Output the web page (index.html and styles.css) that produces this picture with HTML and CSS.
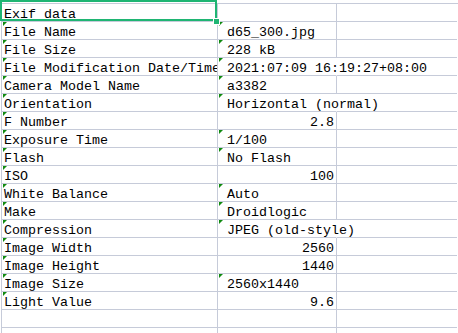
FILE: index.html
```html
<!DOCTYPE html>
<html>
<head>
<meta charset="utf-8">
<link rel="stylesheet" href="styles.css">
</head>
<body>
<div class="sheet">
  <div class="row"><div class="c a sel">Exif data<span class="handle"></span></div><div class="c b"></div><div class="c x"></div></div>
  <div class="row"><div class="c a t">File Name</div><div class="c b t"> d65_300.jpg</div><div class="c x"></div></div>
  <div class="row"><div class="c a t">File Size</div><div class="c b t"> 228 kB</div><div class="c x"></div></div>
  <div class="row"><div class="c a t">File Modification Date/Time</div><div class="c b t spill"> 2021:07:09 16:19:27+08:00</div><div class="c x"></div></div>
  <div class="row"><div class="c a t">Camera Model Name</div><div class="c b t"> a3382</div><div class="c x"></div></div>
  <div class="row"><div class="c a t">Orientation</div><div class="c b t spill"> Horizontal (normal)</div><div class="c x"></div></div>
  <div class="row"><div class="c a t">F Number</div><div class="c b num">2.8</div><div class="c x"></div></div>
  <div class="row"><div class="c a t">Exposure Time</div><div class="c b t"> 1/100</div><div class="c x"></div></div>
  <div class="row"><div class="c a t">Flash</div><div class="c b t"> No Flash</div><div class="c x"></div></div>
  <div class="row"><div class="c a t">ISO</div><div class="c b num">100</div><div class="c x"></div></div>
  <div class="row"><div class="c a t">White Balance</div><div class="c b t"> Auto</div><div class="c x"></div></div>
  <div class="row"><div class="c a t">Make</div><div class="c b t"> Droidlogic</div><div class="c x"></div></div>
  <div class="row"><div class="c a t">Compression</div><div class="c b t spill"> JPEG (old-style)</div><div class="c x"></div></div>
  <div class="row"><div class="c a t">Image Width</div><div class="c b num">2560</div><div class="c x"></div></div>
  <div class="row"><div class="c a t">Image Height</div><div class="c b num">1440</div><div class="c x"></div></div>
  <div class="row"><div class="c a t">Image Size</div><div class="c b t"> 2560x1440</div><div class="c x"></div></div>
  <div class="row"><div class="c a t">Light Value</div><div class="c b num">9.6</div><div class="c x"></div></div>
  <div class="row"><div class="c a"></div><div class="c b"></div><div class="c x"></div></div>
  <div class="row"><div class="c a"></div><div class="c b"></div><div class="c x"></div></div>
</div>
</body>
</html>
```
FILE: styles.css
```css
html, body {
  margin: 0;
  padding: 0;
  background: #ffffff;
  width: 458px;
  height: 333px;
  overflow: hidden;
}
.sheet {
  margin: 3px 0 0 1px;
  border-top: 1px solid #c6cbd9;
  border-left: 1px solid #c6cbd9;
  width: 457px;
  box-sizing: border-box;
  font-family: "Liberation Mono", "DejaVu Sans Mono", monospace;
  font-size: 13.333px;
  color: #000000;
}
.row {
  display: flex;
  height: 18px;
}
.c {
  box-sizing: border-box;
  flex-shrink: 0;
  height: 18px;
  border-right: 1px solid #c6cbd9;
  border-bottom: 1px solid #c6cbd9;
  line-height: 21px;
  white-space: pre;
  position: relative;
}
.a {
  width: 216px;
  padding-left: 2px;
  overflow: hidden;
}
.b {
  width: 119px;
  padding-left: 1px;
  padding-right: 2px;
}
.x {
  width: 120px;
  border-right: none;
}
.num {
  text-align: right;
}
.spill {
  border-right-color: #ffffff;
  z-index: 1;
}
.t::before {
  content: "";
  position: absolute;
  left: 1px;
  top: 0;
  width: 0;
  height: 0;
  border-top: 4px solid #108a10;
  border-right: 4px solid transparent;
}
.sel {
  overflow: visible;
  z-index: 3;
}
.sel::after {
  content: "";
  position: absolute;
  left: -2px;
  top: -4px;
  width: 217px;
  height: 21px;
  box-sizing: border-box;
  border: 2px solid #1fb573;
  pointer-events: none;
}
.handle {
  position: absolute;
  left: 211px;
  top: 14px;
  width: 5px;
  height: 5px;
  background: #1fb573;
  border: 1px solid #ffffff;
  z-index: 2;
}
```
